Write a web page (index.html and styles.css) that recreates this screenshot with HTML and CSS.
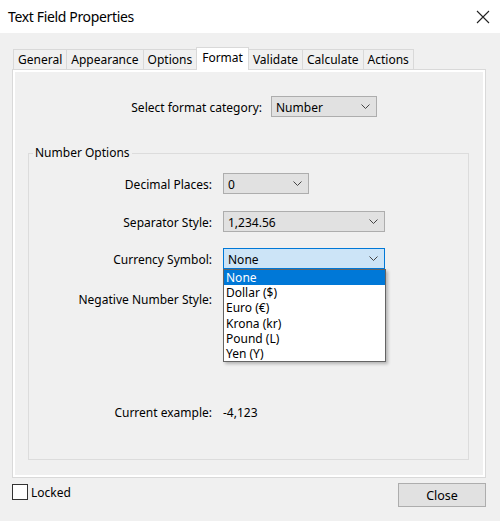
FILE: index.html
```html
<!DOCTYPE html>
<html>
<head>
<meta charset="utf-8">
<link rel="stylesheet" href="styles.css">
</head>
<body>
<div class="window">
  <div class="titlebar">
    <span class="title">Text Field Properties</span>
    <svg class="close-x" width="14" height="14" viewBox="0 0 14 14"><path d="M1 1 L13 13 M13 1 L1 13" stroke="#222" stroke-width="1.1" fill="none"/></svg>
  </div>
  <div class="main">
    <div class="tabs">
      <div class="tab">General</div>
      <div class="tab">Appearance</div>
      <div class="tab">Options</div>
      <div class="tab active">Format</div>
      <div class="tab">Validate</div>
      <div class="tab">Calculate</div>
      <div class="tab">Actions</div>
    </div>
    <div class="panel">
      <div class="toprow">
        <span class="toplabel">Select format category:</span>
        <div class="select sel-category"><span>Number</span><svg class="chev" width="9" height="5" viewBox="0 0 9 5"><path d="M0.5 0.5 L4.5 4.5 L8.5 0.5" stroke="#444" fill="none"/></svg></div>
      </div>
      <fieldset class="group">
        <legend>Number Options</legend>
        <div class="row r-decimal">
          <span class="label">Decimal Places:</span>
          <div class="select sel-small"><span>0</span><svg class="chev" width="9" height="5" viewBox="0 0 9 5"><path d="M0.5 0.5 L4.5 4.5 L8.5 0.5" stroke="#444" fill="none"/></svg></div>
        </div>
        <div class="row r-sep">
          <span class="label">Separator Style:</span>
          <div class="select sel-wide"><span>1,234.56</span><svg class="chev" width="9" height="5" viewBox="0 0 9 5"><path d="M0.5 0.5 L4.5 4.5 L8.5 0.5" stroke="#444" fill="none"/></svg></div>
        </div>
        <div class="row r-cur">
          <span class="label">Currency Symbol:</span>
          <div class="combo">
            <div class="select sel-wide focused"><span>None</span><svg class="chev" width="9" height="5" viewBox="0 0 9 5"><path d="M0.5 0.5 L4.5 4.5 L8.5 0.5" stroke="#444" fill="none"/></svg></div>
            <ul class="dropdown">
              <li class="hl">None</li>
              <li>Dollar ($)</li>
              <li>Euro (€)</li>
              <li>Krona (kr)</li>
              <li>Pound (L)</li>
              <li>Yen (Y)</li>
            </ul>
          </div>
        </div>
        <div class="row r-neg">
          <span class="label">Negative Number Style:</span>
        </div>
        <div class="row r-ex">
          <span class="label">Current example:</span>
          <span class="value">-4,123</span>
        </div>
      </fieldset>
    </div>
    <div class="bottom">
      <label class="check"><span class="box"></span><span class="check-text">Locked</span></label>
      <div class="button">Close</div>
    </div>
  </div>
</div>
</body>
</html>
```

FILE: styles.css
```css
* { box-sizing: border-box; }
html, body { margin: 0; padding: 0; }
body {
  width: 500px;
  height: 521px;
  background: #f0f0f0;
  font-family: "Noto Sans", "Open Sans", sans-serif;
  font-size: 12px;
  color: #000;
  overflow: hidden;
}
.titlebar {
  height: 33px;
  background: #fff;
  display: flex;
  align-items: center;
  justify-content: space-between;
  padding: 0 10px 0 8px;
}
.title { font-size: 14px; letter-spacing: -0.35px; }
.close-x { margin-top: 1px; }
.main { padding: 14px 14px 0 12px; }
.tabs {
  display: flex;
  align-items: flex-end;
  height: 22px;
  padding-left: 1px;
}
.tab {
  height: 20px;
  line-height: 20px;
  padding: 0 4px;
  border: 1px solid #d9d9d9;
  border-bottom: none;
  margin-right: -1px;
  background: #f0f0f0;
}
.tab.active {
  height: 23px;
  line-height: 20px;
  margin-bottom: -1px;
  background: #fff;
  position: relative;
  z-index: 1;
  padding: 0 5px;
}
.panel {
  height: 409px;
  border: 1px solid #d9d9d9;
  box-shadow: inset 0 0 0 2px #fff;
  padding: 26px 16px 0 15px;
}
.toprow { display: flex; align-items: center; }
.toplabel { width: 234px; text-align: right; margin-right: 9px; padding-top: 1px; }
.select {
  height: 21px;
  background: #e1e1e1;
  border: 1px solid #adadad;
  display: flex;
  align-items: center;
  justify-content: space-between;
  padding: 1px 6px 0 4px;
}
.select .chev { margin-top: -1px; }
.sel-category { width: 106px; }
.sel-small { width: 86px; }
.sel-wide { width: 162px; }
.select.focused { background: #cce4f7; border-color: #0078d7; }
.group {
  margin: 28px 0 0 0;
  padding: 0 0 37px 0;
  border: 1px solid #dcdcdc;
}
.group legend {
  margin-left: 4px;
  padding: 0 2px;
  line-height: 16px;
}
.row { display: flex; align-items: center; height: 21px; }
.label { width: 183px; text-align: right; margin-right: 11px; padding-top: 1px; }
.value { padding-top: 1px; }
.r-decimal { margin-top: 12px; }
.r-sep { margin-top: 17px; }
.r-cur { margin-top: 16px; }
.r-neg { margin-top: 19px; }
.r-ex { margin-top: 92px; }
.combo { position: relative; }
.dropdown {
  position: absolute;
  top: 21px;
  left: 0;
  width: 163px;
  margin: 0;
  padding: 0;
  list-style: none;
  background: #fff;
  border: 1px solid #646464;
  box-shadow: 2px 2px 3px rgba(0,0,0,0.25);
  z-index: 2;
}
.dropdown li {
  height: 15.2px;
  line-height: 15px;
  padding-left: 2px;
}
.dropdown li.hl { background: #0078d7; color: #fff; }
.bottom {
  display: flex;
  justify-content: space-between;
  align-items: flex-start;
  margin-top: 5px;
}
.check { display: flex; align-items: center; height: 17px; }
.box {
  width: 16px;
  height: 16px;
  border: 1px solid #333;
  background: #fff;
  margin-right: 3px;
}
.check-text { padding-top: 1px; }
.button {
  width: 88px;
  height: 24px;
  background: #e1e1e1;
  border: 1px solid #adadad;
  text-align: center;
  line-height: 23px;
  font-size: 12.5px;
}
```
